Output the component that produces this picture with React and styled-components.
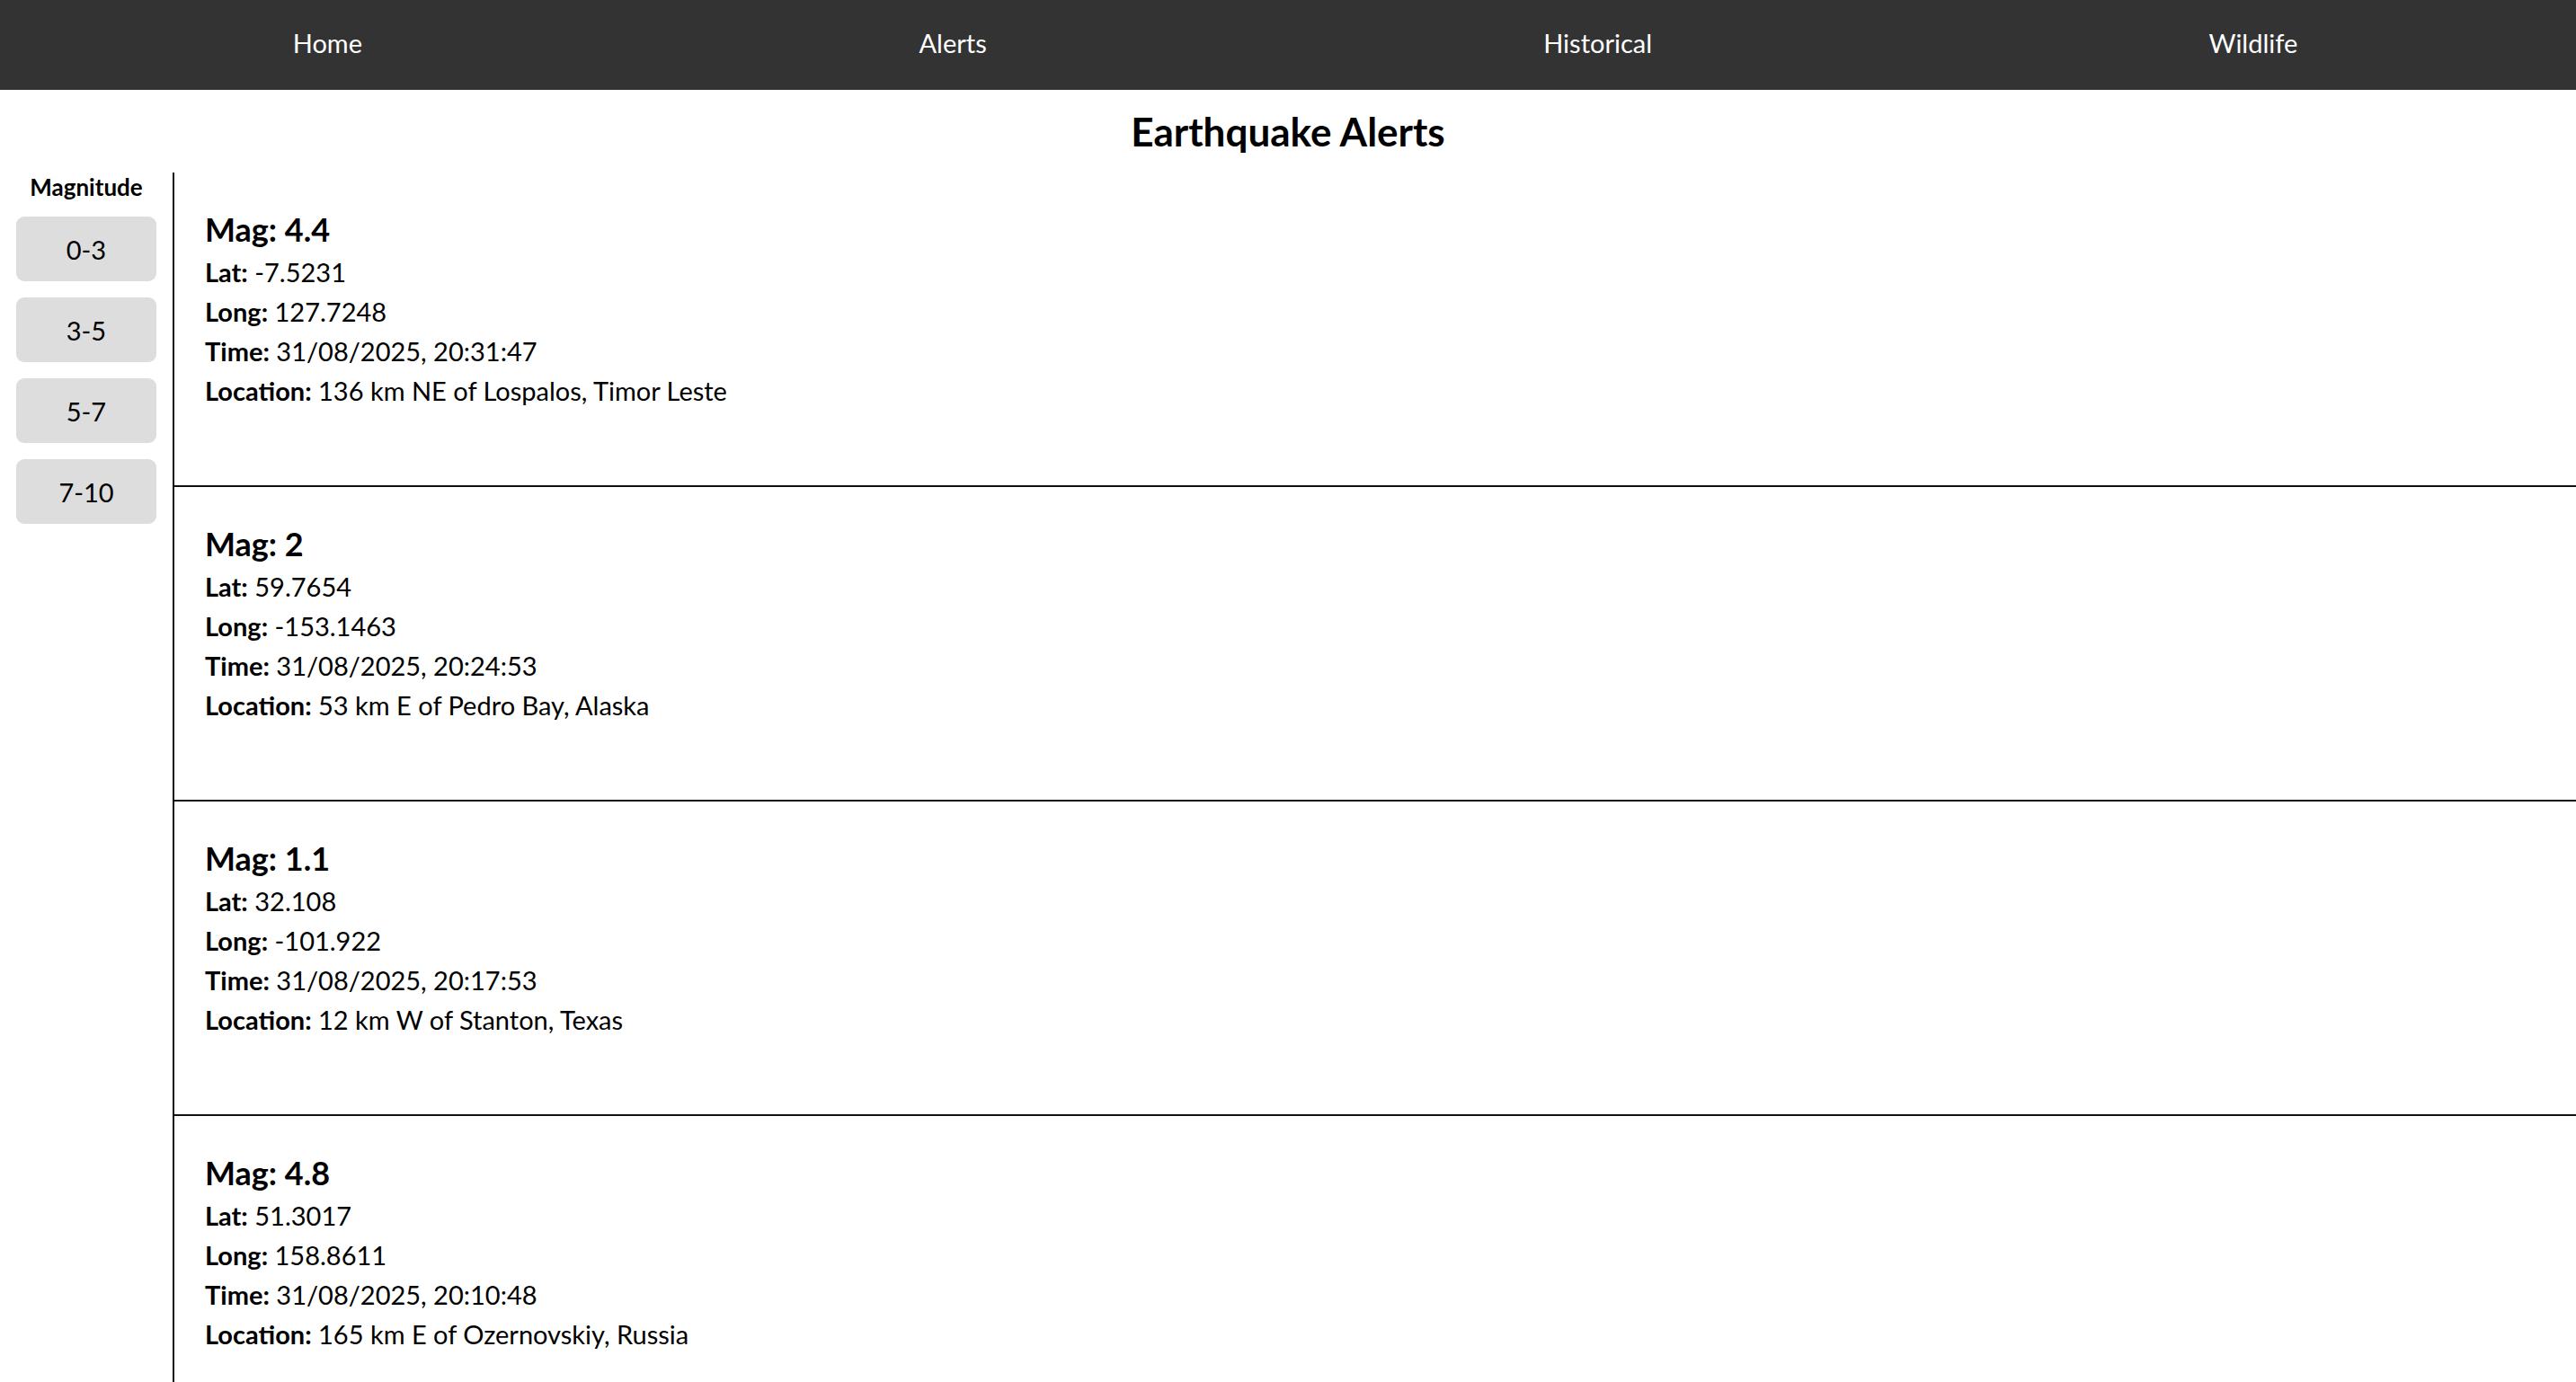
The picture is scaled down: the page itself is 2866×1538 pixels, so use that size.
import React from 'react'
import styled, { createGlobalStyle } from 'styled-components'

const GlobalStyle = createGlobalStyle`
  html, body {
    margin: 0;
    padding: 0;
    background: #ffffff;
  }
  body {
    font-family: 'Segoe UI', Lato, 'Open Sans', sans-serif;
    color: #000000;
  }
`

const NavBar = styled.nav`
  height: 100px;
  background: #333333;
  display: flex;
  align-items: center;
  justify-content: space-around;
  padding-left: 16px;
  padding-bottom: 6px;
  box-sizing: border-box;
`

const NavLink = styled.a`
  color: #ffffff;
  font-size: 29px;
  text-decoration: none;
  cursor: pointer;
`

const Title = styled.h2`
  margin: 0;
  height: 92px;
  display: flex;
  align-items: center;
  justify-content: center;
  font-size: 44px;
  font-weight: 700;
`

const Layout = styled.div`
  display: flex;
  align-items: stretch;
`

const Sidebar = styled.aside`
  width: 192px;
  flex: 0 0 192px;
  border-right: 2px solid #111111;
  display: flex;
  flex-direction: column;
  align-items: center;
  gap: 18px;
`

const SideLabel = styled.div`
  font-size: 26px;
  font-weight: 700;
  line-height: 32px;
  margin-bottom: -1px;
`

const RangeButton = styled.button`
  width: 156px;
  height: 72px;
  border: none;
  border-radius: 9px;
  background: #dddddd;
  font-family: inherit;
  font-size: 29px;
  color: #000000;
  cursor: pointer;
`

const Feed = styled.main`
  flex: 1;
`

const Card = styled.section`
  height: 350px;
  box-sizing: border-box;
  padding: 39px 34px;
  border-bottom: 2px solid #111111;
`

const MagLine = styled.h3`
  margin: 0 0 2px;
  font-size: 36px;
  font-weight: 700;
  line-height: 48px;
`

const Field = styled.p`
  margin: 0;
  font-size: 29px;
  line-height: 44px;

  strong {
    font-weight: 700;
  }
`

const links = ['Home', 'Alerts', 'Historical', 'Wildlife']
const ranges = ['0-3', '3-5', '5-7', '7-10']

const quakes = [
  { mag: '4.4', lat: '-7.5231', long: '127.7248', time: '31/08/2025, 20:31:47', place: '136 km NE of Lospalos, Timor Leste' },
  { mag: '2', lat: '59.7654', long: '-153.1463', time: '31/08/2025, 20:24:53', place: '53 km E of Pedro Bay, Alaska' },
  { mag: '1.1', lat: '32.108', long: '-101.922', time: '31/08/2025, 20:17:53', place: '12 km W of Stanton, Texas' },
  { mag: '4.8', lat: '51.3017', long: '158.8611', time: '31/08/2025, 20:10:48', place: '165 km E of Ozernovskiy, Russia' },
]

export default function App() {
  return (
    <>
      <GlobalStyle />
      <NavBar>
        {links.map((l) => (
          <NavLink key={l}>{l}</NavLink>
        ))}
      </NavBar>
      <Title>Earthquake Alerts</Title>
      <Layout>
        <Sidebar>
          <SideLabel>Magnitude</SideLabel>
          {ranges.map((r) => (
            <RangeButton key={r}>{r}</RangeButton>
          ))}
        </Sidebar>
        <Feed>
          {quakes.map((q) => (
            <Card key={q.time}>
              <MagLine>Mag: {q.mag}</MagLine>
              <Field><strong>Lat:</strong> {q.lat}</Field>
              <Field><strong>Long:</strong> {q.long}</Field>
              <Field><strong>Time:</strong> {q.time}</Field>
              <Field><strong>Location:</strong> {q.place}</Field>
            </Card>
          ))}
        </Feed>
      </Layout>
    </>
  )
}
